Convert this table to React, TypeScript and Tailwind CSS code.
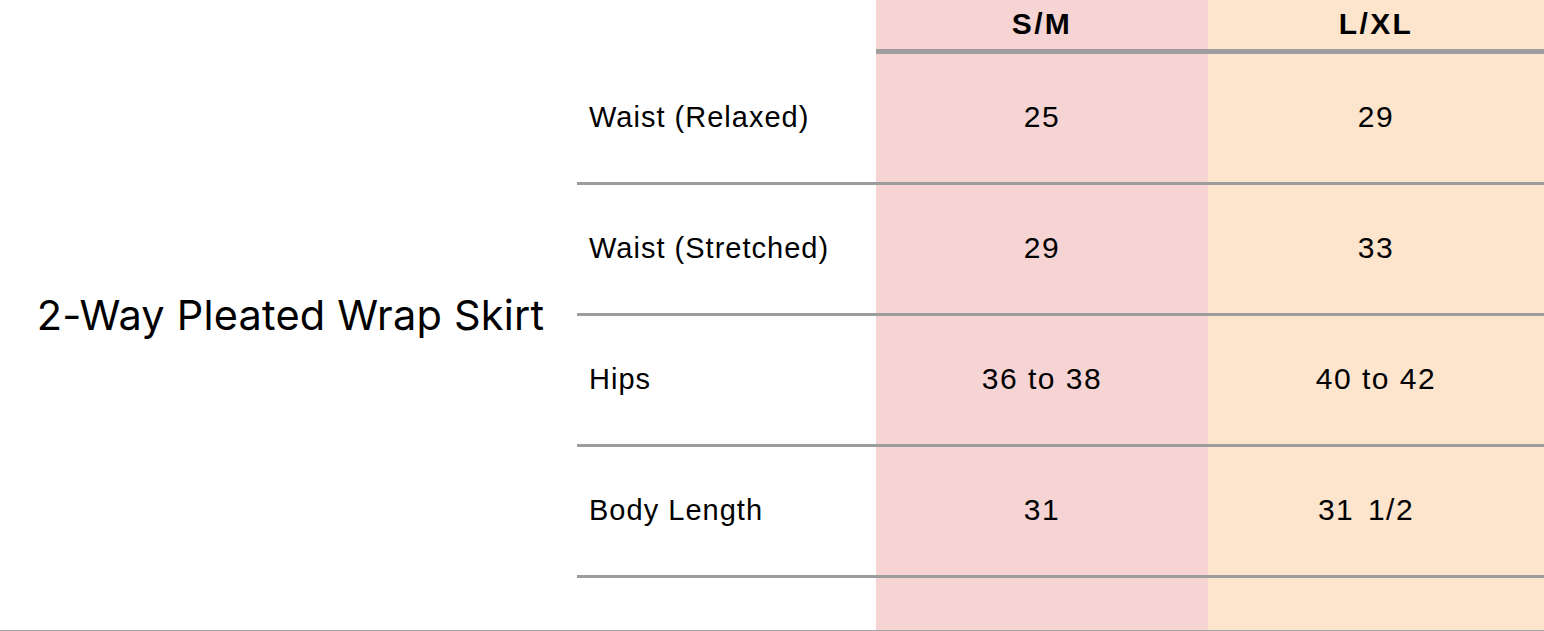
import React from "react";

const rows = [
  { label: "Waist (Relaxed)", sm: "25", lx: "29", lxExtra: "" },
  { label: "Waist (Stretched)", sm: "29", lx: "33", lxExtra: "" },
  { label: "Hips", sm: "36 to 38", lx: "40 to 42", lxExtra: "" },
  { label: "Body Length", sm: "31", lx: "31  1/2", lxExtra: "pr-[20px] [word-spacing:-3px]" },
];

export default function App() {
  return (
    <div className="flex w-[1544px] h-[631px] bg-white border-b border-[#a3a3a3] text-black">
      <div className="w-[577px] flex items-center justify-center pl-[4px]">
        <h1 className="text-[41.5px] font-normal font-['Inter',sans-serif] tracking-[0.005em] whitespace-nowrap">
          2-Way Pleated Wrap Skirt
        </h1>
      </div>
      <div className="flex-1 grid grid-cols-[299px_332px_336px] font-['Liberation_Sans',Arial,sans-serif]">
        {/* label column */}
        <div className="flex flex-col">
          <div className="h-[54px]" />
          {rows.map((r) => (
            <div
              key={r.label}
              className="h-[131px] border-b-[3px] border-[#9c9c9c] flex items-center pl-3 text-[29px] tracking-[0.035em]"
            >
              {r.label}
            </div>
          ))}
        </div>
        {/* S/M */}
        <div className="flex flex-col bg-[#f5d4d3]">
          <div className="h-[54px] border-b-[5px] border-[#9e9e9e] flex items-center justify-center text-[30px] font-bold tracking-[0.08em] pb-[2px]">
            S/M
          </div>
          {rows.map((r) => (
            <div
              key={r.label}
              className="h-[131px] border-b-[3px] border-[#9c9c9c] flex items-center justify-center text-[30px] tracking-[0.05em] pb-[4px] whitespace-pre"
            >
              {r.sm}
            </div>
          ))}
        </div>
        {/* L/XL */}
        <div className="flex flex-col bg-[#fce4cd]">
          <div className="h-[54px] border-b-[5px] border-[#9e9e9e] flex items-center justify-center text-[30px] font-bold tracking-[0.08em] pb-[2px]">
            L/XL
          </div>
          {rows.map((r) => (
            <div
              key={r.label}
              className={`h-[131px] border-b-[3px] border-[#9c9c9c] flex items-center justify-center text-[30px] tracking-[0.05em] pb-[4px] whitespace-pre ${r.lxExtra}`}
            >
              {r.lx}
            </div>
          ))}
        </div>
      </div>
    </div>
  );
}
